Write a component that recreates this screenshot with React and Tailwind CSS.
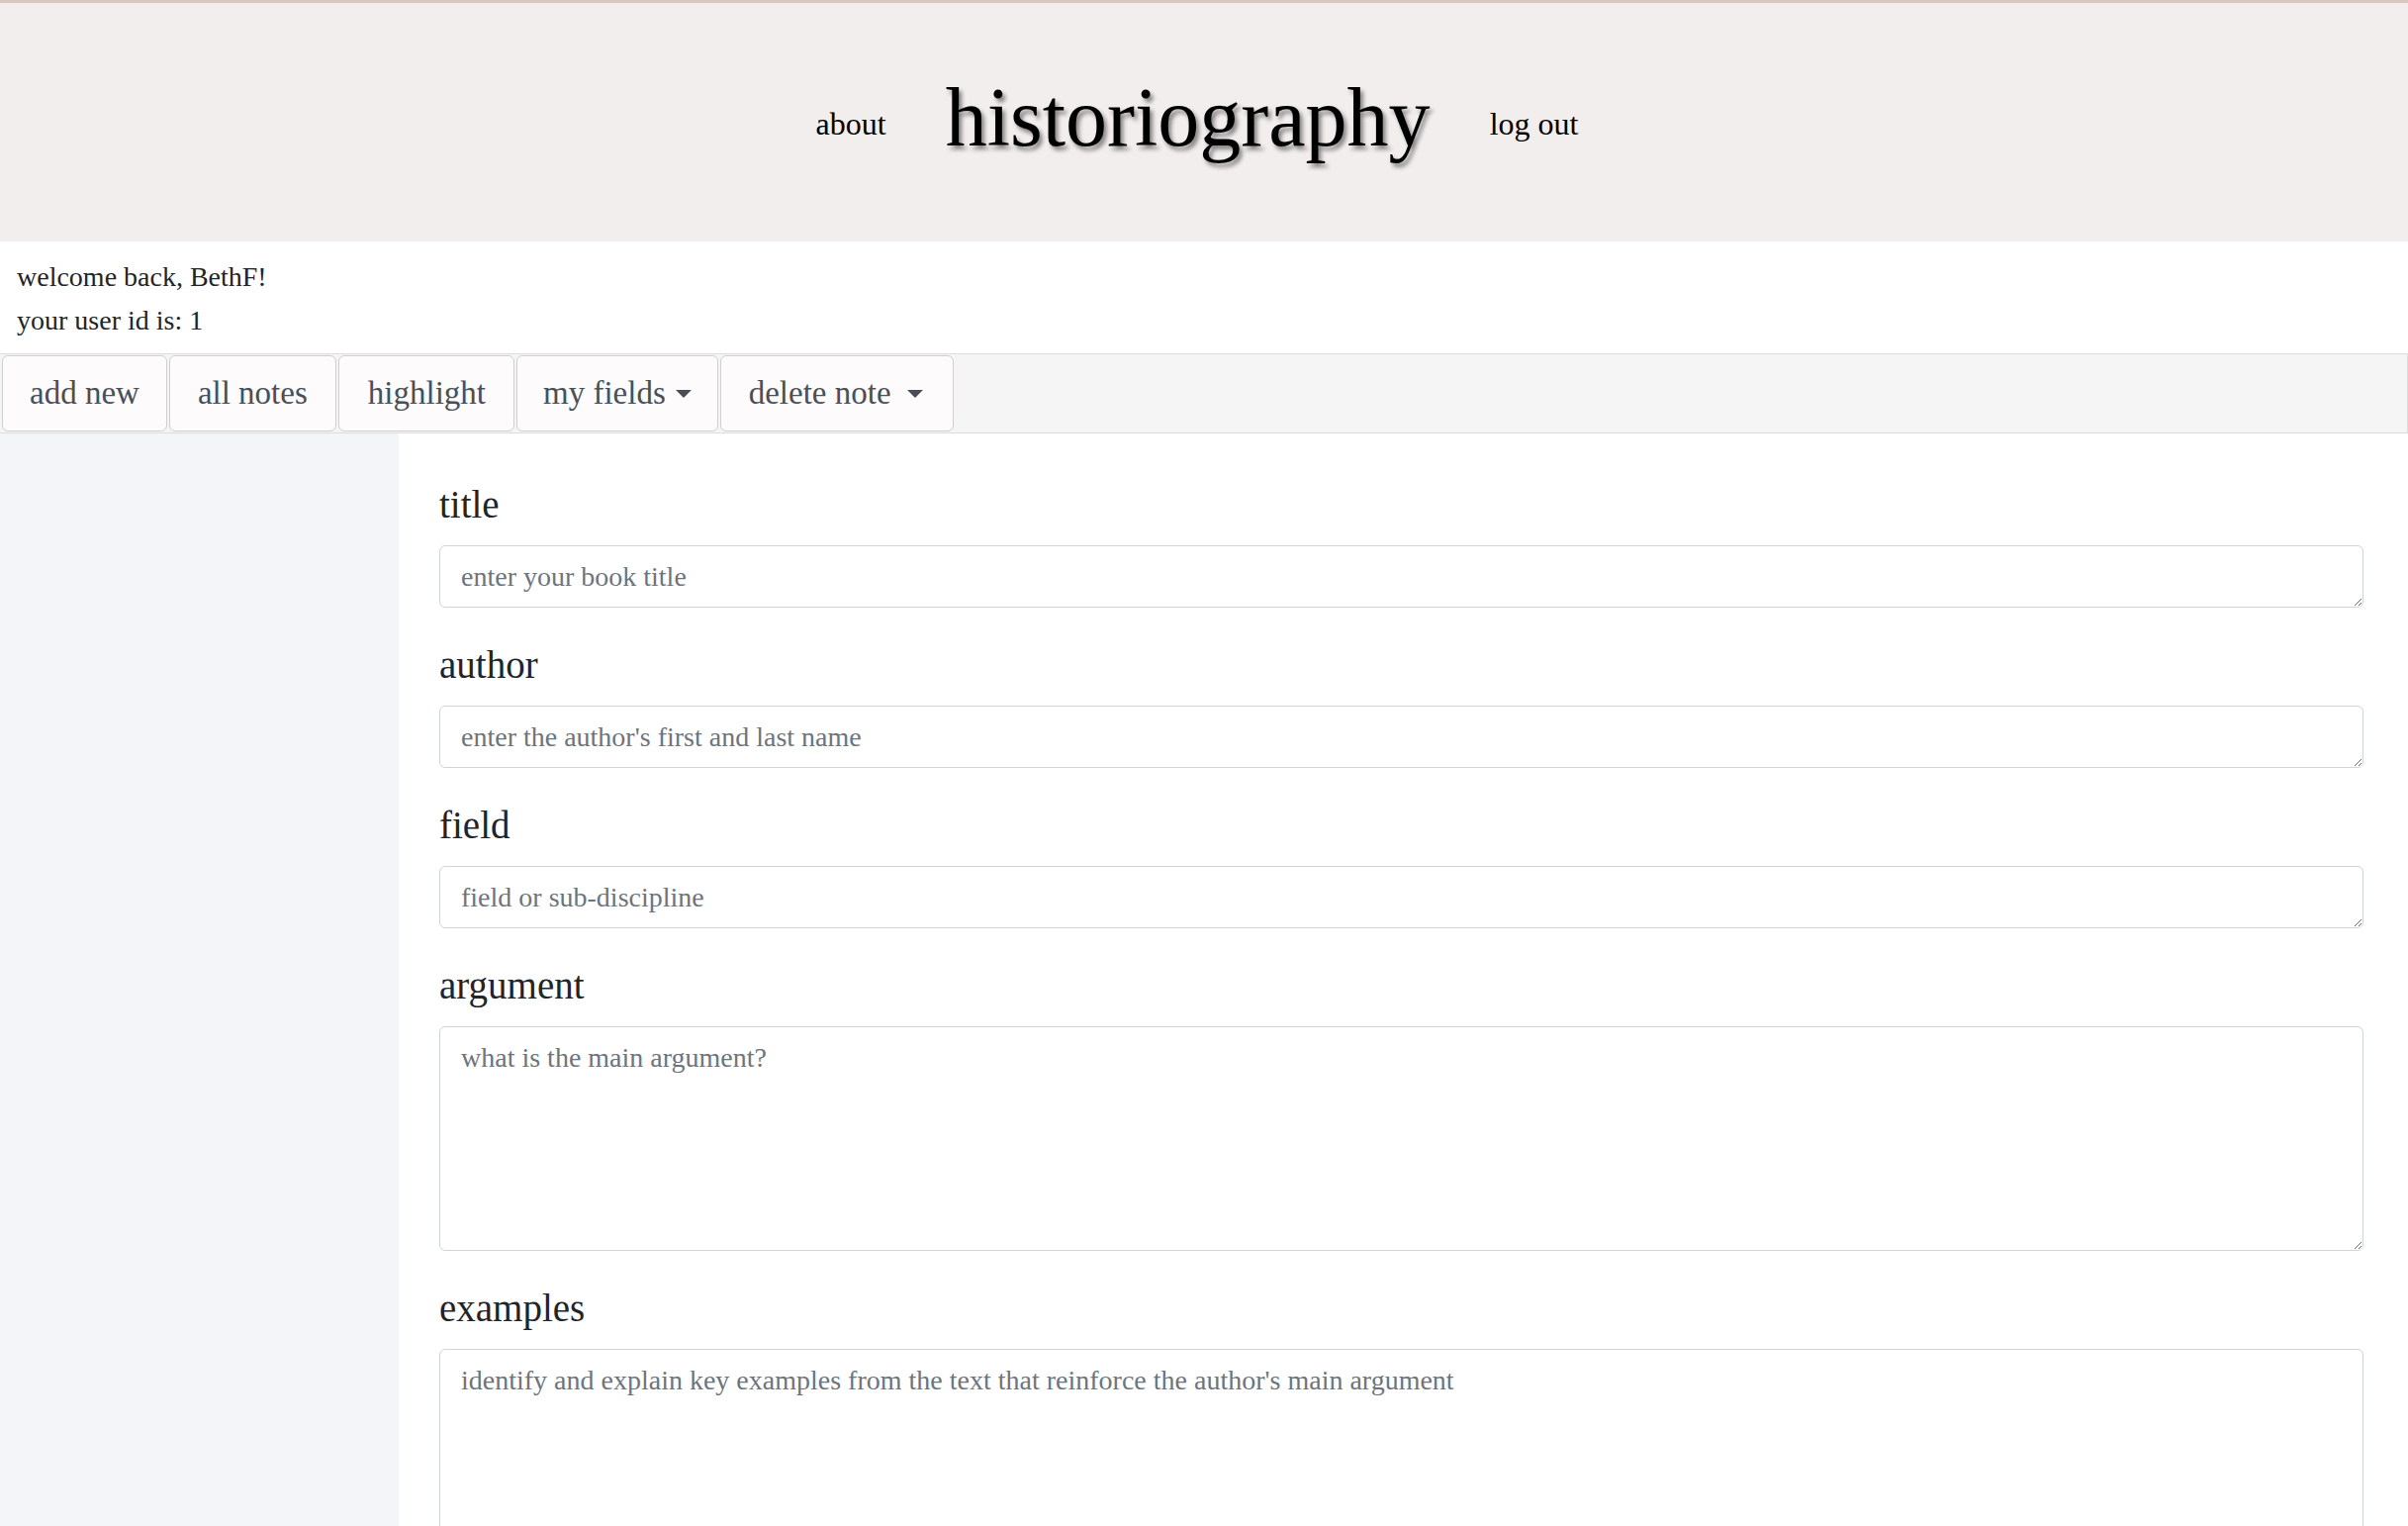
import { useState } from 'react';

const serif = "font-['Liberation_Serif','DejaVu_Serif',serif]";

const fields = [
  { name: 'title', placeholder: 'enter your book title', tall: false },
  { name: 'author', placeholder: "enter the author's first and last name", tall: false },
  { name: 'field', placeholder: 'field or sub-discipline', tall: false },
  { name: 'argument', placeholder: 'what is the main argument?', tall: true },
  { name: 'examples', placeholder: "identify and explain key examples from the text that reinforce the author's main argument", tall: true },
];

const Caret = ({ className }) => (
  <span className={`inline-block w-0 h-0 border-x-[8px] border-x-transparent border-t-[8px] border-t-[#4a4e54] ${className}`}></span>
);

const NavButton = ({ children, className = 'px-[26px]' }) => (
  <button className={`h-full flex items-center rounded-[6px] border border-[#cfcfcf] bg-[#fdfbfb] text-[33px] text-[#495057] ${className}`}>
    {children}
  </button>
);

const App = () => {
  const [values, setValues] = useState({});

  return (
    <div className={`min-h-screen flex flex-col bg-white text-[#212529] ${serif}`}>
      {/* Header */}
      <header className="h-[244px] border-t-[3px] border-[#d9c6be] bg-[#f2eeed] pb-[10px] pr-[14px] flex items-center justify-center gap-[60px]">
        <a className="text-[32px] leading-none text-black mt-[12px]">about</a>
        <h1 className="text-[84px] leading-none text-black [text-shadow:3px_4px_4px_rgba(0,0,0,0.45)]">historiography</h1>
        <a className="text-[32px] leading-none text-black mt-[12px]">log out</a>
      </header>

      {/* Welcome */}
      <div className="pt-[14px] pb-[11px] pl-[17px] text-[28px] leading-[44px]">
        <p>welcome back, BethF!</p>
        <p>your user id is: 1</p>
      </div>

      {/* Toolbar */}
      <nav className="h-[81px] flex items-stretch gap-[2px] pl-[2px] bg-[#f5f5f5] border-y border-r border-[#dcdcdc] py-[1px]">
        <NavButton className="px-[27px]">add new</NavButton>
        <NavButton className="px-[28px]">all notes</NavButton>
        <NavButton className="pl-[29px] pr-[28px]">highlight</NavButton>
        <NavButton className="px-[26px]">
          my fields
          <Caret className="ml-[10px]" />
        </NavButton>
        <NavButton className="pl-[28px] pr-[30px]">
          delete note
          <Caret className="ml-[16px]" />
        </NavButton>
      </nav>

      {/* Body */}
      <div className="flex flex-1">
        <aside className="w-[403px] shrink-0 bg-[#f4f5f9]"></aside>
        <form className="flex-1 pt-[48px] pl-[41px] pr-[45px] pb-[40px] flex flex-col">
          {fields.map((f) => (
            <div key={f.name} className="flex flex-col mb-[34px]">
              <label className="text-[39px] leading-[48px] mb-[17px]">{f.name}</label>
              <textarea
                value={values[f.name] || ''}
                onChange={(e) => setValues({ ...values, [f.name]: e.target.value })}
                placeholder={f.placeholder}
                className={`w-full ${f.tall ? 'h-[227px]' : 'h-[63px]'} rounded-[6px] border border-[#ced4da] bg-white px-[21px] py-[10px] text-[28px] leading-[41px] text-[#212529] placeholder:text-[#6c757d] focus:outline-none`}
              ></textarea>
            </div>
          ))}
        </form>
      </div>
    </div>
  );
};

export default App;
